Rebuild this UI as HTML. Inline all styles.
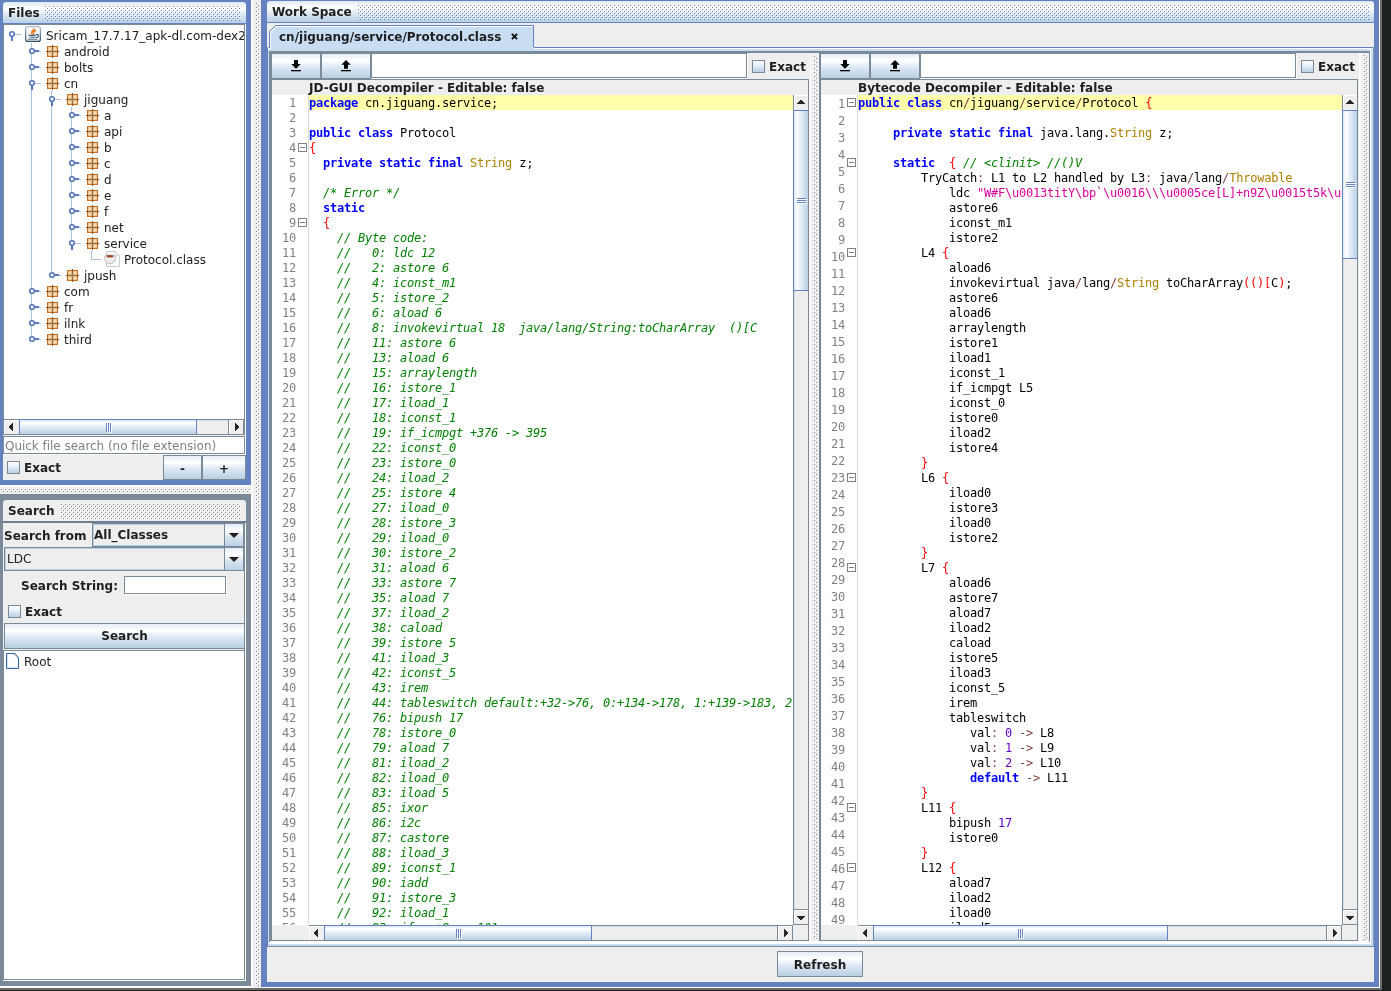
<!DOCTYPE html>
<html lang="en"><head><meta charset="utf-8"><title>Bytecode Viewer</title>
<style>
*{box-sizing:border-box;margin:0;padding:0}
html,body{width:1391px;height:991px;overflow:hidden;background:#1e221e}
body{position:relative;font-family:"DejaVu Sans","Liberation Sans",sans-serif;font-size:12px;color:#1c1c1c;line-height:15px}
#app{position:absolute;left:0;top:0;width:1391px;height:991px;overflow:hidden;filter:contrast(1)}
.a{position:absolute}
.b{font-weight:bold}
/* +1px baseline tweak to match Java2D text placement */
.ui{padding-top:1px;font-family:"DejaVu Sans","Liberation Sans",sans-serif;font-size:12px;white-space:pre;color:#202020}
.grad{background:linear-gradient(to bottom,#dde8f3 0%,#ffffff 30%,#dde8f3 60%,#b8cfe5 100%)}
.gradh{background:linear-gradient(to right,#dde8f3 0%,#ffffff 30%,#dde8f3 60%,#b8cfe5 100%)}
.btn{border:1px solid #7a8a99;background:linear-gradient(to bottom,#e4edf6 0%,#ffffff 28%,#dde8f3 55%,#b8cfe5 100%)}
.tf{border:1px solid #7a8a99;background:#fff;box-shadow:1px 1px 0 #fff}
.cb{width:13px;height:13px;border:1px solid #7a8a99;background:linear-gradient(to bottom,#ffffff 0%,#e8f0f8 40%,#b8cfe5 100%)}
.mono{font-family:"DejaVu Sans Mono","Liberation Mono",monospace;font-size:12px;letter-spacing:-0.2246px;white-space:pre;line-height:15px;color:#000}
.ln{font-family:"DejaVu Sans Mono","Liberation Mono",monospace;color:#808080;text-align:right;white-space:pre}
.k{color:#0000ff;font-weight:bold}
.c{color:#008000;font-style:italic}
.s{color:#ff0000}
.o{color:#804040}
.t{color:#ad8000}
.q{color:#dc009c}
.n{color:#6400c8}
.row{position:absolute;left:0;height:15px;white-space:pre}
.trow{padding-top:1px;position:absolute;white-space:pre;font-size:12px;color:#202020;line-height:16px;height:16px}
</style></head>
<body>
<div id="app">
<div class="a" style="left:0px;top:0px;width:1382px;height:990px;background:#6b6b6b"></div>
<div class="a" style="left:0px;top:0px;width:1380px;height:988px;background:#ffffff"></div>
<div class="a" style="left:0px;top:0px;width:1379px;height:987px;background:#eeeeee"></div>
<div class="a" style="left:0px;top:0px;width:251px;height:485px;background:#6382bf"></div>
<div class="a grad" style="left:3px;top:2px;width:243px;height:21px;border-radius:3px 3px 0 0"></div>
<div class="a" style="left:3px;top:24px;width:243px;height:456px;background:#eeeeee"></div>
<div class="a" style="left:3px;top:24px;width:243px;height:1px;background:#7a8a99"></div>
<svg class="a" style="left:44px;top:5px" width="197" height="16" shape-rendering="crispEdges"><defs><pattern id="bpF" width="4" height="4" patternUnits="userSpaceOnUse"><rect x="0" y="0" width="1" height="1" fill="#ffffff"/><rect x="1" y="1" width="1" height="1" fill="#6382bf"/><rect x="2" y="2" width="1" height="1" fill="#ffffff"/><rect x="3" y="3" width="1" height="1" fill="#6382bf"/></pattern></defs><rect width="197" height="16" fill="url(#bpF)"/></svg>
<div class="a ui b" style="left:8px;top:3px;width:40px;height:18px;line-height:18px">Files</div>
<div class="a" style="left:0px;top:485px;width:251px;height:2px;background:#ffffff"></div>
<div class="a" style="left:0px;top:487px;width:251px;height:7px;background:#eeeeee"></div>
<svg class="a" style="left:0px;top:488px" width="251" height="4" shape-rendering="crispEdges"><defs><pattern id="spH" width="4" height="4" patternUnits="userSpaceOnUse"><rect x="0" y="0" width="1" height="1" fill="#ffffff"/><rect x="1" y="1" width="1" height="1" fill="#7a8a99"/><rect x="2" y="2" width="1" height="1" fill="#ffffff"/><rect x="3" y="3" width="1" height="1" fill="#7a8a99"/></pattern></defs><rect width="251" height="4" fill="url(#spH)"/></svg>
<div class="a" style="left:0px;top:494px;width:251px;height:492px;background:#7a8a99"></div>
<div class="a" style="left:3px;top:500px;width:243px;height:21px;background:#eeeeee;border-radius:3px 3px 0 0"></div>
<div class="a" style="left:3px;top:523px;width:243px;height:458px;background:#eeeeee"></div>
<svg class="a" style="left:60px;top:503px" width="181" height="16" shape-rendering="crispEdges"><defs><pattern id="bpS" width="4" height="4" patternUnits="userSpaceOnUse"><rect x="0" y="0" width="1" height="1" fill="#ffffff"/><rect x="1" y="1" width="1" height="1" fill="#7a8a99"/><rect x="2" y="2" width="1" height="1" fill="#ffffff"/><rect x="3" y="3" width="1" height="1" fill="#7a8a99"/></pattern></defs><rect width="181" height="16" fill="url(#bpS)"/></svg>
<div class="a ui b" style="left:8px;top:501px;width:60px;height:18px;line-height:18px">Search</div>
<div class="a" style="left:0px;top:986px;width:251px;height:2px;background:#ffffff"></div>
<div class="a" style="left:251px;top:0px;width:2px;height:988px;background:#ffffff"></div>
<div class="a" style="left:253px;top:0px;width:8px;height:988px;background:#eeeeee"></div>
<svg class="a" style="left:255px;top:2px" width="4" height="984" shape-rendering="crispEdges"><defs><pattern id="spV" width="4" height="4" patternUnits="userSpaceOnUse"><rect x="0" y="0" width="1" height="1" fill="#ffffff"/><rect x="1" y="1" width="1" height="1" fill="#7a8a99"/><rect x="2" y="2" width="1" height="1" fill="#ffffff"/><rect x="3" y="3" width="1" height="1" fill="#7a8a99"/></pattern></defs><rect width="4" height="984" fill="url(#spV)"/></svg>
<div class="a" style="left:261px;top:0px;width:1118px;height:987px;background:#6382bf"></div>
<div class="a grad" style="left:267px;top:1px;width:1107px;height:21px;border-radius:3px 3px 0 0"></div>
<div class="a" style="left:267px;top:23px;width:1107px;height:959px;background:#eeeeee"></div>
<svg class="a" style="left:357px;top:4px" width="1012" height="16" shape-rendering="crispEdges"><defs><pattern id="bpW" width="4" height="4" patternUnits="userSpaceOnUse"><rect x="0" y="0" width="1" height="1" fill="#ffffff"/><rect x="1" y="1" width="1" height="1" fill="#6382bf"/><rect x="2" y="2" width="1" height="1" fill="#ffffff"/><rect x="3" y="3" width="1" height="1" fill="#6382bf"/></pattern></defs><rect width="1012" height="16" fill="url(#bpW)"/></svg>
<div class="a ui b" style="left:272px;top:2px;width:90px;height:18px;line-height:18px">Work Space</div>
<div class="a" style="left:3px;top:24px;width:242px;height:411px;background:#ffffff;border:1px solid #7a8a99"></div>
<div class="a" style="left:245px;top:24px;width:1px;height:456px;background:#ffffff"></div>
<div class="a" style="left:4px;top:25px;width:240px;height:394px;overflow:hidden;background:#fff"><div class="a" style="left:27px;top:18px;width:1px;height:296px;background:#a9c0e2"></div><div class="a" style="left:47px;top:66px;width:1px;height:184px;background:#a9c0e2"></div><div class="a" style="left:67px;top:82px;width:1px;height:136px;background:#a9c0e2"></div><div class="a" style="left:87px;top:226px;width:1px;height:9px;background:#a9c0e2"></div><div class="a" style="left:87px;top:234px;width:10px;height:1px;background:#a9c0e2"></div><svg class="a" style="left:4px;top:5px" width="16" height="14" viewBox="0 0 16 14"><rect x="7" y="4" width="6" height="1" fill="#a9c0e2"/><rect x="3" y="6" width="2" height="5" fill="#5878be"/><circle cx="4" cy="4" r="2.3" fill="#fff" stroke="#5878be" stroke-width="1.6"/></svg><svg class="a" style="left:21px;top:1px" width="16" height="16" viewBox="0 0 16 16"><defs><linearGradient id="jg" x1="0" y1="0" x2="0" y2="1"><stop offset="0" stop-color="#a9bfd1"/><stop offset="1" stop-color="#2f4f68"/></linearGradient><linearGradient id="jf" x1="0" y1="0" x2="0" y2="1"><stop offset="0" stop-color="#ffffff"/><stop offset="1" stop-color="#e6e6e6"/></linearGradient></defs><rect x="0.6" y="0.6" width="14.8" height="14.8" rx="2.2" fill="url(#jf)" stroke="url(#jg)" stroke-width="1.2"/><path d="M7.4 8.6 C5.2 6.6 7.4 4.6 9.6 2.8 M8.6 8.2 C7.4 6.6 9 5.8 10.8 4.6 M7 6 L9 4.8" fill="none" stroke="#ea7210" stroke-width="1.15" stroke-linecap="round"/><path d="M4 9.4 H10.6 M5.2 11.3 H9.8" fill="none" stroke="#40627f" stroke-width="1.1" stroke-linecap="round"/><path d="M3.4 13.3 H11.8" fill="none" stroke="#5b7c98" stroke-width="1" stroke-linecap="round"/><path d="M11.4 8.3 C14.4 8.6 14.2 11.4 11.3 11.7" fill="none" stroke="#40627f" stroke-width="1.2" stroke-linecap="round"/></svg><div class="trow" style="left:42px;top:1px;height:18px;line-height:18px">Sricam_17.7.17_apk-dl.com-dex2jar.jar</div><svg class="a" style="left:24px;top:22px" width="16" height="14" viewBox="0 0 16 14"><rect x="6" y="3" width="5" height="2" fill="#5878be"/><rect x="11" y="4" width="2" height="1" fill="#a9c0e2"/><circle cx="4" cy="4" r="2.3" fill="#fff" stroke="#5878be" stroke-width="1.6"/></svg><svg class="a" style="left:42px;top:20px" width="13" height="13" viewBox="0 0 13 13"><defs><radialGradient id="pg" cx="50%" cy="50%" r="60%"><stop offset="0" stop-color="#fff4c2"/><stop offset="1" stop-color="#ecc48c"/></radialGradient></defs><rect x="1.5" y="1.5" width="10" height="10" fill="#efcc96" stroke="#c6711f" stroke-width="1"/><rect x="2.4" y="2.4" width="3.4" height="3.4" fill="url(#pg)"/><rect x="7.2" y="2.4" width="3.4" height="3.4" fill="url(#pg)"/><rect x="2.4" y="7.2" width="3.4" height="3.4" fill="url(#pg)"/><rect x="7.2" y="7.2" width="3.4" height="3.4" fill="url(#pg)"/><rect x="6" y="0" width="1" height="13" fill="#7c4a30"/><rect x="0" y="6" width="13" height="1" fill="#7c4a30"/><rect x="5.5" y="2" width="2" height="9" fill="#b98b66" opacity=".55"/><rect x="2" y="5.5" width="9" height="2" fill="#b98b66" opacity=".55"/></svg><div class="trow" style="left:60px;top:18px;height:16px;line-height:16px">android</div><svg class="a" style="left:24px;top:38px" width="16" height="14" viewBox="0 0 16 14"><rect x="6" y="3" width="5" height="2" fill="#5878be"/><rect x="11" y="4" width="2" height="1" fill="#a9c0e2"/><circle cx="4" cy="4" r="2.3" fill="#fff" stroke="#5878be" stroke-width="1.6"/></svg><svg class="a" style="left:42px;top:36px" width="13" height="13" viewBox="0 0 13 13"><defs><radialGradient id="pg" cx="50%" cy="50%" r="60%"><stop offset="0" stop-color="#fff4c2"/><stop offset="1" stop-color="#ecc48c"/></radialGradient></defs><rect x="1.5" y="1.5" width="10" height="10" fill="#efcc96" stroke="#c6711f" stroke-width="1"/><rect x="2.4" y="2.4" width="3.4" height="3.4" fill="url(#pg)"/><rect x="7.2" y="2.4" width="3.4" height="3.4" fill="url(#pg)"/><rect x="2.4" y="7.2" width="3.4" height="3.4" fill="url(#pg)"/><rect x="7.2" y="7.2" width="3.4" height="3.4" fill="url(#pg)"/><rect x="6" y="0" width="1" height="13" fill="#7c4a30"/><rect x="0" y="6" width="13" height="1" fill="#7c4a30"/><rect x="5.5" y="2" width="2" height="9" fill="#b98b66" opacity=".55"/><rect x="2" y="5.5" width="9" height="2" fill="#b98b66" opacity=".55"/></svg><div class="trow" style="left:60px;top:34px;height:16px;line-height:16px">bolts</div><svg class="a" style="left:24px;top:54px" width="16" height="14" viewBox="0 0 16 14"><rect x="7" y="4" width="6" height="1" fill="#a9c0e2"/><rect x="3" y="6" width="2" height="5" fill="#5878be"/><circle cx="4" cy="4" r="2.3" fill="#fff" stroke="#5878be" stroke-width="1.6"/></svg><svg class="a" style="left:42px;top:52px" width="13" height="13" viewBox="0 0 13 13"><defs><radialGradient id="pg" cx="50%" cy="50%" r="60%"><stop offset="0" stop-color="#fff4c2"/><stop offset="1" stop-color="#ecc48c"/></radialGradient></defs><rect x="1.5" y="1.5" width="10" height="10" fill="#efcc96" stroke="#c6711f" stroke-width="1"/><rect x="2.4" y="2.4" width="3.4" height="3.4" fill="url(#pg)"/><rect x="7.2" y="2.4" width="3.4" height="3.4" fill="url(#pg)"/><rect x="2.4" y="7.2" width="3.4" height="3.4" fill="url(#pg)"/><rect x="7.2" y="7.2" width="3.4" height="3.4" fill="url(#pg)"/><rect x="6" y="0" width="1" height="13" fill="#7c4a30"/><rect x="0" y="6" width="13" height="1" fill="#7c4a30"/><rect x="5.5" y="2" width="2" height="9" fill="#b98b66" opacity=".55"/><rect x="2" y="5.5" width="9" height="2" fill="#b98b66" opacity=".55"/></svg><div class="trow" style="left:60px;top:50px;height:16px;line-height:16px">cn</div><svg class="a" style="left:44px;top:70px" width="16" height="14" viewBox="0 0 16 14"><rect x="7" y="4" width="6" height="1" fill="#a9c0e2"/><rect x="3" y="6" width="2" height="5" fill="#5878be"/><circle cx="4" cy="4" r="2.3" fill="#fff" stroke="#5878be" stroke-width="1.6"/></svg><svg class="a" style="left:62px;top:68px" width="13" height="13" viewBox="0 0 13 13"><defs><radialGradient id="pg" cx="50%" cy="50%" r="60%"><stop offset="0" stop-color="#fff4c2"/><stop offset="1" stop-color="#ecc48c"/></radialGradient></defs><rect x="1.5" y="1.5" width="10" height="10" fill="#efcc96" stroke="#c6711f" stroke-width="1"/><rect x="2.4" y="2.4" width="3.4" height="3.4" fill="url(#pg)"/><rect x="7.2" y="2.4" width="3.4" height="3.4" fill="url(#pg)"/><rect x="2.4" y="7.2" width="3.4" height="3.4" fill="url(#pg)"/><rect x="7.2" y="7.2" width="3.4" height="3.4" fill="url(#pg)"/><rect x="6" y="0" width="1" height="13" fill="#7c4a30"/><rect x="0" y="6" width="13" height="1" fill="#7c4a30"/><rect x="5.5" y="2" width="2" height="9" fill="#b98b66" opacity=".55"/><rect x="2" y="5.5" width="9" height="2" fill="#b98b66" opacity=".55"/></svg><div class="trow" style="left:80px;top:66px;height:16px;line-height:16px">jiguang</div><svg class="a" style="left:64px;top:86px" width="16" height="14" viewBox="0 0 16 14"><rect x="6" y="3" width="5" height="2" fill="#5878be"/><rect x="11" y="4" width="2" height="1" fill="#a9c0e2"/><circle cx="4" cy="4" r="2.3" fill="#fff" stroke="#5878be" stroke-width="1.6"/></svg><svg class="a" style="left:82px;top:84px" width="13" height="13" viewBox="0 0 13 13"><defs><radialGradient id="pg" cx="50%" cy="50%" r="60%"><stop offset="0" stop-color="#fff4c2"/><stop offset="1" stop-color="#ecc48c"/></radialGradient></defs><rect x="1.5" y="1.5" width="10" height="10" fill="#efcc96" stroke="#c6711f" stroke-width="1"/><rect x="2.4" y="2.4" width="3.4" height="3.4" fill="url(#pg)"/><rect x="7.2" y="2.4" width="3.4" height="3.4" fill="url(#pg)"/><rect x="2.4" y="7.2" width="3.4" height="3.4" fill="url(#pg)"/><rect x="7.2" y="7.2" width="3.4" height="3.4" fill="url(#pg)"/><rect x="6" y="0" width="1" height="13" fill="#7c4a30"/><rect x="0" y="6" width="13" height="1" fill="#7c4a30"/><rect x="5.5" y="2" width="2" height="9" fill="#b98b66" opacity=".55"/><rect x="2" y="5.5" width="9" height="2" fill="#b98b66" opacity=".55"/></svg><div class="trow" style="left:100px;top:82px;height:16px;line-height:16px">a</div><svg class="a" style="left:64px;top:102px" width="16" height="14" viewBox="0 0 16 14"><rect x="6" y="3" width="5" height="2" fill="#5878be"/><rect x="11" y="4" width="2" height="1" fill="#a9c0e2"/><circle cx="4" cy="4" r="2.3" fill="#fff" stroke="#5878be" stroke-width="1.6"/></svg><svg class="a" style="left:82px;top:100px" width="13" height="13" viewBox="0 0 13 13"><defs><radialGradient id="pg" cx="50%" cy="50%" r="60%"><stop offset="0" stop-color="#fff4c2"/><stop offset="1" stop-color="#ecc48c"/></radialGradient></defs><rect x="1.5" y="1.5" width="10" height="10" fill="#efcc96" stroke="#c6711f" stroke-width="1"/><rect x="2.4" y="2.4" width="3.4" height="3.4" fill="url(#pg)"/><rect x="7.2" y="2.4" width="3.4" height="3.4" fill="url(#pg)"/><rect x="2.4" y="7.2" width="3.4" height="3.4" fill="url(#pg)"/><rect x="7.2" y="7.2" width="3.4" height="3.4" fill="url(#pg)"/><rect x="6" y="0" width="1" height="13" fill="#7c4a30"/><rect x="0" y="6" width="13" height="1" fill="#7c4a30"/><rect x="5.5" y="2" width="2" height="9" fill="#b98b66" opacity=".55"/><rect x="2" y="5.5" width="9" height="2" fill="#b98b66" opacity=".55"/></svg><div class="trow" style="left:100px;top:98px;height:16px;line-height:16px">api</div><svg class="a" style="left:64px;top:118px" width="16" height="14" viewBox="0 0 16 14"><rect x="6" y="3" width="5" height="2" fill="#5878be"/><rect x="11" y="4" width="2" height="1" fill="#a9c0e2"/><circle cx="4" cy="4" r="2.3" fill="#fff" stroke="#5878be" stroke-width="1.6"/></svg><svg class="a" style="left:82px;top:116px" width="13" height="13" viewBox="0 0 13 13"><defs><radialGradient id="pg" cx="50%" cy="50%" r="60%"><stop offset="0" stop-color="#fff4c2"/><stop offset="1" stop-color="#ecc48c"/></radialGradient></defs><rect x="1.5" y="1.5" width="10" height="10" fill="#efcc96" stroke="#c6711f" stroke-width="1"/><rect x="2.4" y="2.4" width="3.4" height="3.4" fill="url(#pg)"/><rect x="7.2" y="2.4" width="3.4" height="3.4" fill="url(#pg)"/><rect x="2.4" y="7.2" width="3.4" height="3.4" fill="url(#pg)"/><rect x="7.2" y="7.2" width="3.4" height="3.4" fill="url(#pg)"/><rect x="6" y="0" width="1" height="13" fill="#7c4a30"/><rect x="0" y="6" width="13" height="1" fill="#7c4a30"/><rect x="5.5" y="2" width="2" height="9" fill="#b98b66" opacity=".55"/><rect x="2" y="5.5" width="9" height="2" fill="#b98b66" opacity=".55"/></svg><div class="trow" style="left:100px;top:114px;height:16px;line-height:16px">b</div><svg class="a" style="left:64px;top:134px" width="16" height="14" viewBox="0 0 16 14"><rect x="6" y="3" width="5" height="2" fill="#5878be"/><rect x="11" y="4" width="2" height="1" fill="#a9c0e2"/><circle cx="4" cy="4" r="2.3" fill="#fff" stroke="#5878be" stroke-width="1.6"/></svg><svg class="a" style="left:82px;top:132px" width="13" height="13" viewBox="0 0 13 13"><defs><radialGradient id="pg" cx="50%" cy="50%" r="60%"><stop offset="0" stop-color="#fff4c2"/><stop offset="1" stop-color="#ecc48c"/></radialGradient></defs><rect x="1.5" y="1.5" width="10" height="10" fill="#efcc96" stroke="#c6711f" stroke-width="1"/><rect x="2.4" y="2.4" width="3.4" height="3.4" fill="url(#pg)"/><rect x="7.2" y="2.4" width="3.4" height="3.4" fill="url(#pg)"/><rect x="2.4" y="7.2" width="3.4" height="3.4" fill="url(#pg)"/><rect x="7.2" y="7.2" width="3.4" height="3.4" fill="url(#pg)"/><rect x="6" y="0" width="1" height="13" fill="#7c4a30"/><rect x="0" y="6" width="13" height="1" fill="#7c4a30"/><rect x="5.5" y="2" width="2" height="9" fill="#b98b66" opacity=".55"/><rect x="2" y="5.5" width="9" height="2" fill="#b98b66" opacity=".55"/></svg><div class="trow" style="left:100px;top:130px;height:16px;line-height:16px">c</div><svg class="a" style="left:64px;top:150px" width="16" height="14" viewBox="0 0 16 14"><rect x="6" y="3" width="5" height="2" fill="#5878be"/><rect x="11" y="4" width="2" height="1" fill="#a9c0e2"/><circle cx="4" cy="4" r="2.3" fill="#fff" stroke="#5878be" stroke-width="1.6"/></svg><svg class="a" style="left:82px;top:148px" width="13" height="13" viewBox="0 0 13 13"><defs><radialGradient id="pg" cx="50%" cy="50%" r="60%"><stop offset="0" stop-color="#fff4c2"/><stop offset="1" stop-color="#ecc48c"/></radialGradient></defs><rect x="1.5" y="1.5" width="10" height="10" fill="#efcc96" stroke="#c6711f" stroke-width="1"/><rect x="2.4" y="2.4" width="3.4" height="3.4" fill="url(#pg)"/><rect x="7.2" y="2.4" width="3.4" height="3.4" fill="url(#pg)"/><rect x="2.4" y="7.2" width="3.4" height="3.4" fill="url(#pg)"/><rect x="7.2" y="7.2" width="3.4" height="3.4" fill="url(#pg)"/><rect x="6" y="0" width="1" height="13" fill="#7c4a30"/><rect x="0" y="6" width="13" height="1" fill="#7c4a30"/><rect x="5.5" y="2" width="2" height="9" fill="#b98b66" opacity=".55"/><rect x="2" y="5.5" width="9" height="2" fill="#b98b66" opacity=".55"/></svg><div class="trow" style="left:100px;top:146px;height:16px;line-height:16px">d</div><svg class="a" style="left:64px;top:166px" width="16" height="14" viewBox="0 0 16 14"><rect x="6" y="3" width="5" height="2" fill="#5878be"/><rect x="11" y="4" width="2" height="1" fill="#a9c0e2"/><circle cx="4" cy="4" r="2.3" fill="#fff" stroke="#5878be" stroke-width="1.6"/></svg><svg class="a" style="left:82px;top:164px" width="13" height="13" viewBox="0 0 13 13"><defs><radialGradient id="pg" cx="50%" cy="50%" r="60%"><stop offset="0" stop-color="#fff4c2"/><stop offset="1" stop-color="#ecc48c"/></radialGradient></defs><rect x="1.5" y="1.5" width="10" height="10" fill="#efcc96" stroke="#c6711f" stroke-width="1"/><rect x="2.4" y="2.4" width="3.4" height="3.4" fill="url(#pg)"/><rect x="7.2" y="2.4" width="3.4" height="3.4" fill="url(#pg)"/><rect x="2.4" y="7.2" width="3.4" height="3.4" fill="url(#pg)"/><rect x="7.2" y="7.2" width="3.4" height="3.4" fill="url(#pg)"/><rect x="6" y="0" width="1" height="13" fill="#7c4a30"/><rect x="0" y="6" width="13" height="1" fill="#7c4a30"/><rect x="5.5" y="2" width="2" height="9" fill="#b98b66" opacity=".55"/><rect x="2" y="5.5" width="9" height="2" fill="#b98b66" opacity=".55"/></svg><div class="trow" style="left:100px;top:162px;height:16px;line-height:16px">e</div><svg class="a" style="left:64px;top:182px" width="16" height="14" viewBox="0 0 16 14"><rect x="6" y="3" width="5" height="2" fill="#5878be"/><rect x="11" y="4" width="2" height="1" fill="#a9c0e2"/><circle cx="4" cy="4" r="2.3" fill="#fff" stroke="#5878be" stroke-width="1.6"/></svg><svg class="a" style="left:82px;top:180px" width="13" height="13" viewBox="0 0 13 13"><defs><radialGradient id="pg" cx="50%" cy="50%" r="60%"><stop offset="0" stop-color="#fff4c2"/><stop offset="1" stop-color="#ecc48c"/></radialGradient></defs><rect x="1.5" y="1.5" width="10" height="10" fill="#efcc96" stroke="#c6711f" stroke-width="1"/><rect x="2.4" y="2.4" width="3.4" height="3.4" fill="url(#pg)"/><rect x="7.2" y="2.4" width="3.4" height="3.4" fill="url(#pg)"/><rect x="2.4" y="7.2" width="3.4" height="3.4" fill="url(#pg)"/><rect x="7.2" y="7.2" width="3.4" height="3.4" fill="url(#pg)"/><rect x="6" y="0" width="1" height="13" fill="#7c4a30"/><rect x="0" y="6" width="13" height="1" fill="#7c4a30"/><rect x="5.5" y="2" width="2" height="9" fill="#b98b66" opacity=".55"/><rect x="2" y="5.5" width="9" height="2" fill="#b98b66" opacity=".55"/></svg><div class="trow" style="left:100px;top:178px;height:16px;line-height:16px">f</div><svg class="a" style="left:64px;top:198px" width="16" height="14" viewBox="0 0 16 14"><rect x="6" y="3" width="5" height="2" fill="#5878be"/><rect x="11" y="4" width="2" height="1" fill="#a9c0e2"/><circle cx="4" cy="4" r="2.3" fill="#fff" stroke="#5878be" stroke-width="1.6"/></svg><svg class="a" style="left:82px;top:196px" width="13" height="13" viewBox="0 0 13 13"><defs><radialGradient id="pg" cx="50%" cy="50%" r="60%"><stop offset="0" stop-color="#fff4c2"/><stop offset="1" stop-color="#ecc48c"/></radialGradient></defs><rect x="1.5" y="1.5" width="10" height="10" fill="#efcc96" stroke="#c6711f" stroke-width="1"/><rect x="2.4" y="2.4" width="3.4" height="3.4" fill="url(#pg)"/><rect x="7.2" y="2.4" width="3.4" height="3.4" fill="url(#pg)"/><rect x="2.4" y="7.2" width="3.4" height="3.4" fill="url(#pg)"/><rect x="7.2" y="7.2" width="3.4" height="3.4" fill="url(#pg)"/><rect x="6" y="0" width="1" height="13" fill="#7c4a30"/><rect x="0" y="6" width="13" height="1" fill="#7c4a30"/><rect x="5.5" y="2" width="2" height="9" fill="#b98b66" opacity=".55"/><rect x="2" y="5.5" width="9" height="2" fill="#b98b66" opacity=".55"/></svg><div class="trow" style="left:100px;top:194px;height:16px;line-height:16px">net</div><svg class="a" style="left:64px;top:214px" width="16" height="14" viewBox="0 0 16 14"><rect x="7" y="4" width="6" height="1" fill="#a9c0e2"/><rect x="3" y="6" width="2" height="5" fill="#5878be"/><circle cx="4" cy="4" r="2.3" fill="#fff" stroke="#5878be" stroke-width="1.6"/></svg><svg class="a" style="left:82px;top:212px" width="13" height="13" viewBox="0 0 13 13"><defs><radialGradient id="pg" cx="50%" cy="50%" r="60%"><stop offset="0" stop-color="#fff4c2"/><stop offset="1" stop-color="#ecc48c"/></radialGradient></defs><rect x="1.5" y="1.5" width="10" height="10" fill="#efcc96" stroke="#c6711f" stroke-width="1"/><rect x="2.4" y="2.4" width="3.4" height="3.4" fill="url(#pg)"/><rect x="7.2" y="2.4" width="3.4" height="3.4" fill="url(#pg)"/><rect x="2.4" y="7.2" width="3.4" height="3.4" fill="url(#pg)"/><rect x="7.2" y="7.2" width="3.4" height="3.4" fill="url(#pg)"/><rect x="6" y="0" width="1" height="13" fill="#7c4a30"/><rect x="0" y="6" width="13" height="1" fill="#7c4a30"/><rect x="5.5" y="2" width="2" height="9" fill="#b98b66" opacity=".55"/><rect x="2" y="5.5" width="9" height="2" fill="#b98b66" opacity=".55"/></svg><div class="trow" style="left:100px;top:210px;height:16px;line-height:16px">service</div><svg class="a" style="left:100px;top:226px" width="16" height="16" viewBox="0 0 16 16"><path d="M2.5 0.6 H11.6 L15.4 4.4 V15.4 H2.5 Z" fill="#ffffff" stroke="#c9c9c9" stroke-width="1"/><path d="M11.6 0.6 V4.4 H15.4" fill="#f4f4f4" stroke="#d2d2d2" stroke-width=".8"/><path d="M0.5 5.4 C0.5 3.6 11.5 3.6 11.5 5.4 C11.7 10.4 9.6 12.8 6 12.8 C2.4 12.8 0.3 10.4 0.5 5.4 Z" fill="#f0f0f0" stroke="#b9b9b9" stroke-width=".9"/><ellipse cx="6" cy="5.3" rx="3.7" ry="1.25" fill="#a04a26"/><path d="M2.4 8.6 C2.8 10.6 4 11.6 6 11.8 C8.6 11.6 9.8 10 10 8" fill="none" stroke="#dcdcdc" stroke-width="1"/></svg><div class="trow" style="left:120px;top:226px;height:16px;line-height:16px">Protocol.class</div><svg class="a" style="left:44px;top:246px" width="16" height="14" viewBox="0 0 16 14"><rect x="6" y="3" width="5" height="2" fill="#5878be"/><rect x="11" y="4" width="2" height="1" fill="#a9c0e2"/><circle cx="4" cy="4" r="2.3" fill="#fff" stroke="#5878be" stroke-width="1.6"/></svg><svg class="a" style="left:62px;top:244px" width="13" height="13" viewBox="0 0 13 13"><defs><radialGradient id="pg" cx="50%" cy="50%" r="60%"><stop offset="0" stop-color="#fff4c2"/><stop offset="1" stop-color="#ecc48c"/></radialGradient></defs><rect x="1.5" y="1.5" width="10" height="10" fill="#efcc96" stroke="#c6711f" stroke-width="1"/><rect x="2.4" y="2.4" width="3.4" height="3.4" fill="url(#pg)"/><rect x="7.2" y="2.4" width="3.4" height="3.4" fill="url(#pg)"/><rect x="2.4" y="7.2" width="3.4" height="3.4" fill="url(#pg)"/><rect x="7.2" y="7.2" width="3.4" height="3.4" fill="url(#pg)"/><rect x="6" y="0" width="1" height="13" fill="#7c4a30"/><rect x="0" y="6" width="13" height="1" fill="#7c4a30"/><rect x="5.5" y="2" width="2" height="9" fill="#b98b66" opacity=".55"/><rect x="2" y="5.5" width="9" height="2" fill="#b98b66" opacity=".55"/></svg><div class="trow" style="left:80px;top:242px;height:16px;line-height:16px">jpush</div><svg class="a" style="left:24px;top:262px" width="16" height="14" viewBox="0 0 16 14"><rect x="6" y="3" width="5" height="2" fill="#5878be"/><rect x="11" y="4" width="2" height="1" fill="#a9c0e2"/><circle cx="4" cy="4" r="2.3" fill="#fff" stroke="#5878be" stroke-width="1.6"/></svg><svg class="a" style="left:42px;top:260px" width="13" height="13" viewBox="0 0 13 13"><defs><radialGradient id="pg" cx="50%" cy="50%" r="60%"><stop offset="0" stop-color="#fff4c2"/><stop offset="1" stop-color="#ecc48c"/></radialGradient></defs><rect x="1.5" y="1.5" width="10" height="10" fill="#efcc96" stroke="#c6711f" stroke-width="1"/><rect x="2.4" y="2.4" width="3.4" height="3.4" fill="url(#pg)"/><rect x="7.2" y="2.4" width="3.4" height="3.4" fill="url(#pg)"/><rect x="2.4" y="7.2" width="3.4" height="3.4" fill="url(#pg)"/><rect x="7.2" y="7.2" width="3.4" height="3.4" fill="url(#pg)"/><rect x="6" y="0" width="1" height="13" fill="#7c4a30"/><rect x="0" y="6" width="13" height="1" fill="#7c4a30"/><rect x="5.5" y="2" width="2" height="9" fill="#b98b66" opacity=".55"/><rect x="2" y="5.5" width="9" height="2" fill="#b98b66" opacity=".55"/></svg><div class="trow" style="left:60px;top:258px;height:16px;line-height:16px">com</div><svg class="a" style="left:24px;top:278px" width="16" height="14" viewBox="0 0 16 14"><rect x="6" y="3" width="5" height="2" fill="#5878be"/><rect x="11" y="4" width="2" height="1" fill="#a9c0e2"/><circle cx="4" cy="4" r="2.3" fill="#fff" stroke="#5878be" stroke-width="1.6"/></svg><svg class="a" style="left:42px;top:276px" width="13" height="13" viewBox="0 0 13 13"><defs><radialGradient id="pg" cx="50%" cy="50%" r="60%"><stop offset="0" stop-color="#fff4c2"/><stop offset="1" stop-color="#ecc48c"/></radialGradient></defs><rect x="1.5" y="1.5" width="10" height="10" fill="#efcc96" stroke="#c6711f" stroke-width="1"/><rect x="2.4" y="2.4" width="3.4" height="3.4" fill="url(#pg)"/><rect x="7.2" y="2.4" width="3.4" height="3.4" fill="url(#pg)"/><rect x="2.4" y="7.2" width="3.4" height="3.4" fill="url(#pg)"/><rect x="7.2" y="7.2" width="3.4" height="3.4" fill="url(#pg)"/><rect x="6" y="0" width="1" height="13" fill="#7c4a30"/><rect x="0" y="6" width="13" height="1" fill="#7c4a30"/><rect x="5.5" y="2" width="2" height="9" fill="#b98b66" opacity=".55"/><rect x="2" y="5.5" width="9" height="2" fill="#b98b66" opacity=".55"/></svg><div class="trow" style="left:60px;top:274px;height:16px;line-height:16px">fr</div><svg class="a" style="left:24px;top:294px" width="16" height="14" viewBox="0 0 16 14"><rect x="6" y="3" width="5" height="2" fill="#5878be"/><rect x="11" y="4" width="2" height="1" fill="#a9c0e2"/><circle cx="4" cy="4" r="2.3" fill="#fff" stroke="#5878be" stroke-width="1.6"/></svg><svg class="a" style="left:42px;top:292px" width="13" height="13" viewBox="0 0 13 13"><defs><radialGradient id="pg" cx="50%" cy="50%" r="60%"><stop offset="0" stop-color="#fff4c2"/><stop offset="1" stop-color="#ecc48c"/></radialGradient></defs><rect x="1.5" y="1.5" width="10" height="10" fill="#efcc96" stroke="#c6711f" stroke-width="1"/><rect x="2.4" y="2.4" width="3.4" height="3.4" fill="url(#pg)"/><rect x="7.2" y="2.4" width="3.4" height="3.4" fill="url(#pg)"/><rect x="2.4" y="7.2" width="3.4" height="3.4" fill="url(#pg)"/><rect x="7.2" y="7.2" width="3.4" height="3.4" fill="url(#pg)"/><rect x="6" y="0" width="1" height="13" fill="#7c4a30"/><rect x="0" y="6" width="13" height="1" fill="#7c4a30"/><rect x="5.5" y="2" width="2" height="9" fill="#b98b66" opacity=".55"/><rect x="2" y="5.5" width="9" height="2" fill="#b98b66" opacity=".55"/></svg><div class="trow" style="left:60px;top:290px;height:16px;line-height:16px">ilnk</div><svg class="a" style="left:24px;top:310px" width="16" height="14" viewBox="0 0 16 14"><rect x="6" y="3" width="5" height="2" fill="#5878be"/><rect x="11" y="4" width="2" height="1" fill="#a9c0e2"/><circle cx="4" cy="4" r="2.3" fill="#fff" stroke="#5878be" stroke-width="1.6"/></svg><svg class="a" style="left:42px;top:308px" width="13" height="13" viewBox="0 0 13 13"><defs><radialGradient id="pg" cx="50%" cy="50%" r="60%"><stop offset="0" stop-color="#fff4c2"/><stop offset="1" stop-color="#ecc48c"/></radialGradient></defs><rect x="1.5" y="1.5" width="10" height="10" fill="#efcc96" stroke="#c6711f" stroke-width="1"/><rect x="2.4" y="2.4" width="3.4" height="3.4" fill="url(#pg)"/><rect x="7.2" y="2.4" width="3.4" height="3.4" fill="url(#pg)"/><rect x="2.4" y="7.2" width="3.4" height="3.4" fill="url(#pg)"/><rect x="7.2" y="7.2" width="3.4" height="3.4" fill="url(#pg)"/><rect x="6" y="0" width="1" height="13" fill="#7c4a30"/><rect x="0" y="6" width="13" height="1" fill="#7c4a30"/><rect x="5.5" y="2" width="2" height="9" fill="#b98b66" opacity=".55"/><rect x="2" y="5.5" width="9" height="2" fill="#b98b66" opacity=".55"/></svg><div class="trow" style="left:60px;top:306px;height:16px;line-height:16px">third</div></div>
<div class="a" style="left:4px;top:419px;width:240px;height:15px;background:#eeeeee;border-top:1px solid #7a8a99"></div><div class="a" style="left:4px;top:420px;width:240px;height:1px;background:#cfdff0"></div><div class="a" style="left:4px;top:420px;width:15px;height:1px;background:#ffffff"></div><div class="a" style="left:4px;top:420px;width:1px;height:14px;background:#ffffff"></div><div class="a" style="left:229px;top:420px;width:14px;height:1px;background:#ffffff"></div><div class="a" style="left:19px;top:419px;width:1px;height:15px;background:#7a8a99"></div><div class="a" style="left:20px;top:420px;width:1px;height:14px;background:#cfdff0"></div><div class="a" style="left:228px;top:419px;width:1px;height:15px;background:#7a8a99"></div><div class="a" style="left:229px;top:420px;width:1px;height:14px;background:#ffffff"></div><div class="a" style="left:243px;top:419px;width:1px;height:15px;background:#7a8a99"></div><div class="a" style="left:19px;top:419px;width:178px;height:15px;border:1px solid #6382bf;border-bottom:0;background:linear-gradient(to bottom,#dde8f3 0%,#ffffff 22%,#dde8f3 58%,#b8cfe5 100%)"></div><div class="a" style="left:106px;top:423px;width:1px;height:9px;background:#6382bf"></div><div class="a" style="left:107px;top:424px;width:1px;height:9px;background:#ffffff"></div><div class="a" style="left:108px;top:423px;width:1px;height:9px;background:#6382bf"></div><div class="a" style="left:109px;top:424px;width:1px;height:9px;background:#ffffff"></div><div class="a" style="left:110px;top:423px;width:1px;height:9px;background:#6382bf"></div><div class="a" style="left:111px;top:424px;width:1px;height:9px;background:#ffffff"></div><svg class="a" style="left:9px;top:423px" width="4" height="8" viewBox="0 0 4 8" shape-rendering="crispEdges" fill="#262626"><rect x="0" y="3" width="1" height="2"/><rect x="1" y="2" width="1" height="4"/><rect x="2" y="1" width="1" height="6"/><rect x="3" y="0" width="1" height="8"/></svg><svg class="a" style="left:235px;top:423px" width="4" height="8" viewBox="0 0 4 8" shape-rendering="crispEdges" fill="#262626"><rect x="3" y="3" width="1" height="2"/><rect x="2" y="2" width="1" height="4"/><rect x="1" y="1" width="1" height="6"/><rect x="0" y="0" width="1" height="8"/></svg>
<div class="a tf ui" style="left:3px;top:436px;width:242px;height:18px;color:#808080;padding-left:1px;letter-spacing:-0.03px;line-height:16px"><span style="color:#808080">Quick file search (no file extension)</span></div>
<div class="a cb" style="left:7px;top:461px;width:13px;height:13px;"></div>
<div class="a ui b" style="left:24px;top:459px;width:50px;height:17px;line-height:17px">Exact</div>
<div class="a btn ui b" style="left:163px;top:455px;width:39px;height:25px;text-align:center;line-height:24px">-</div>
<div class="a btn ui b" style="left:202px;top:455px;width:44px;height:25px;text-align:center;line-height:24px">+</div>
<div class="a" style="left:3px;top:521px;width:243px;height:2px;background:#6f7f90"></div>
<div class="a" style="left:244px;top:523px;width:1px;height:127px;background:#7a8a99"></div>
<div class="a ui b" style="left:4px;top:526px;width:90px;height:18px;line-height:18px">Search from</div>
<div class="a" style="left:92px;top:523px;width:152px;height:24px;border:1px solid #7a8a99;background:#eeeeee;box-shadow:inset 1px 1px 0 #b8cfe5, inset -1px -1px 0 #b8cfe5"></div><div class="a btn" style="left:224px;top:523px;width:20px;height:24px;border:1px solid #7a8a99;"></div><svg class="a" style="left:229px;top:533px" width="10" height="5" viewBox="0 0 10 5"><polygon points="0,0 10,0 5,5" fill="#1f1f1f"/></svg><div class="a ui b" style="left:94px;top:523px;width:128px;height:24px;line-height:23px">All_Classes</div>
<div class="a" style="left:4px;top:547px;width:240px;height:24px;border:1px solid #7a8a99;background:#eeeeee;box-shadow:inset 1px 1px 0 #b8cfe5, inset -1px -1px 0 #b8cfe5"></div><div class="a btn" style="left:224px;top:547px;width:20px;height:24px;border:1px solid #7a8a99;"></div><svg class="a" style="left:229px;top:557px" width="10" height="5" viewBox="0 0 10 5"><polygon points="0,0 10,0 5,5" fill="#1f1f1f"/></svg><div class="a ui b" style="left:7px;top:547px;width:216px;height:24px;line-height:23px"><span style="font-weight:normal">LDC</span></div>
<div class="a ui b" style="left:21px;top:576px;width:104px;height:18px;line-height:18px">Search String:</div>
<div class="a tf" style="left:124px;top:576px;width:102px;height:18px;"></div>
<div class="a cb" style="left:8px;top:605px;width:13px;height:13px;"></div>
<div class="a ui b" style="left:25px;top:603px;width:50px;height:17px;line-height:17px">Exact</div>
<div class="a btn ui b" style="left:4px;top:623px;width:241px;height:26px;text-align:center;line-height:23px">Search</div>
<div class="a" style="left:3px;top:650px;width:242px;height:330px;background:#ffffff;border:1px solid #7a8a99"></div>
<div class="a" style="left:245px;top:523px;width:1px;height:458px;background:#ffffff"></div>
<div class="a" style="left:3px;top:980px;width:243px;height:1px;background:#ffffff"></div>
<svg class="a" style="left:6px;top:653px" width="13" height="16" viewBox="0 0 13 16"><path d="M0.5 0.5 H9 L12.5 5 V15.5 H0.5 Z" fill="#ffffff" stroke="#2f62a3" stroke-width="1"/><path d="M1.5 1.5 V14.5 H11.5" fill="none" stroke="#dce8f6" stroke-width="1"/><path d="M8 1.2 L11.8 5.6" fill="none" stroke="#6f95c6" stroke-width="1" stroke-dasharray="1 0.7"/></svg>
<div class="a ui" style="left:24px;top:653px;width:60px;height:17px;line-height:17px">Root</div>
<svg class="a" style="left:267px;top:23px" width="272" height="28" viewBox="0 0 272 28"><path d="M2.5 25.5 V8.5 L8.5 2.5 H266.5 V25" fill="#c8ddf2" stroke="#6382bf" stroke-width="1"/><path d="M3.5 25 V9 L9 3.5 H265.5" fill="none" stroke="#ffffff" stroke-width="1"/><rect x="3" y="24" width="264" height="4" fill="#c8ddf2"/></svg>
<div class="a ui b" style="left:279px;top:28px;width:240px;height:17px;line-height:17px">cn/jiguang/service/Protocol.class</div>
<svg class="a" style="left:511px;top:33px" width="7" height="7" viewBox="0 0 7 7"><path d="M0.9 0.9 L6.1 6.1 M6.1 0.9 L0.9 6.1" stroke="#111" stroke-width="1.9" fill="none"/></svg>
<div class="a" style="left:534px;top:47px;width:840px;height:1px;background:#6382bf"></div>
<div class="a" style="left:534px;top:48px;width:837px;height:1px;background:#ffffff"></div>
<div class="a" style="left:267px;top:49px;width:1107px;height:2px;background:#c8ddf2"></div>
<div class="a" style="left:268px;top:48px;width:3px;height:1px;background:#ffffff"></div>
<div class="a" style="left:267px;top:47px;width:1px;height:900px;background:#6382bf"></div>
<div class="a" style="left:268px;top:49px;width:1px;height:897px;background:#c8ddf2"></div>
<div class="a" style="left:1371px;top:49px;width:2px;height:897px;background:#c8ddf2"></div>
<div class="a" style="left:1373px;top:47px;width:1px;height:900px;background:#8a9cb0"></div>
<div class="a" style="left:1370px;top:49px;width:1px;height:895px;background:#ffffff"></div>
<div class="a" style="left:268px;top:944px;width:1105px;height:2px;background:#c8ddf2"></div>
<div class="a" style="left:267px;top:946px;width:1107px;height:1px;background:#7a8a99"></div>
<div class="a" style="left:269px;top:942px;width:1102px;height:2px;background:#ffffff"></div>
<div class="a" style="left:269px;top:51px;width:1101px;height:2px;background:#7a8a99"></div>
<div class="a" style="left:269px;top:51px;width:2px;height:891px;background:#7a8a99"></div>
<div class="a" style="left:270px;top:941px;width:1100px;height:1px;background:#ffffff"></div>
<div class="a" style="left:1369px;top:53px;width:1px;height:889px;background:#7a8a99"></div>
<div class="a btn" style="left:271px;top:53px;width:50px;height:26px;"></div><svg class="a" style="left:291px;top:60px" width="10" height="12" viewBox="0 0 10 12"><path d="M3 0 H7 V4 H9.7 L5 8.7 L0.3 4 H3 Z" fill="#000"/><rect x="0" y="10" width="10" height="1.3" fill="#000"/></svg><div class="a btn" style="left:321px;top:53px;width:50px;height:26px;"></div><svg class="a" style="left:341px;top:60px" width="10" height="12" viewBox="0 0 10 12"><path d="M3 8.7 H7 V4.7 H9.7 L5 0 L0.3 4.7 H3 Z" fill="#000"/><rect x="0" y="10" width="10" height="1.3" fill="#000"/></svg><div class="a tf" style="left:371px;top:53px;width:376px;height:25px;"></div><div class="a" style="left:372px;top:78px;width:376px;height:1px;background:#ffffff"></div><div class="a" style="left:747px;top:54px;width:1px;height:25px;background:#ffffff"></div><div class="a cb" style="left:752px;top:60px;width:13px;height:13px;"></div><div class="a ui b" style="left:769px;top:58px;width:40px;height:17px;line-height:17px">Exact</div><div class="a" style="left:271px;top:79px;width:538px;height:862px;border:1px solid #7a8a99;background:#eeeeee"></div><div class="a ui b" style="left:309px;top:79px;width:300px;height:17px;line-height:17px">JD-GUI Decompiler - Editable: false</div><div class="a" style="left:272px;top:95px;width:521px;height:830px;background:#ffffff"></div><div class="a" style="left:309px;top:95px;width:484px;height:15px;background:#ffffaa"></div><div class="a" style="left:308px;top:95px;width:1px;height:830px;background:#dddddd"></div><div class="a" style="left:793px;top:95px;width:15px;height:830px;background:#eeeeee;border-left:1px solid #7a8a99"></div><div class="a" style="left:794px;top:95px;width:1px;height:830px;background:#cfdff0"></div><div class="a" style="left:794px;top:95px;width:1px;height:15px;background:#ffffff"></div><div class="a" style="left:794px;top:95px;width:14px;height:1px;background:#ffffff"></div><div class="a" style="left:794px;top:910px;width:1px;height:14px;background:#ffffff"></div><div class="a" style="left:793px;top:110px;width:15px;height:1px;background:#7a8a99"></div><div class="a" style="left:794px;top:111px;width:14px;height:1px;background:#cfdff0"></div><div class="a" style="left:793px;top:909px;width:15px;height:1px;background:#7a8a99"></div><div class="a" style="left:794px;top:910px;width:14px;height:1px;background:#ffffff"></div><div class="a" style="left:793px;top:924px;width:15px;height:1px;background:#7a8a99"></div><div class="a" style="left:793px;top:110px;width:15px;height:181px;border:1px solid #6382bf;border-right:0;background:linear-gradient(to right,#dde8f3 0%,#ffffff 22%,#dde8f3 58%,#b8cfe5 100%)"></div><div class="a" style="left:797px;top:198px;width:9px;height:1px;background:#6382bf"></div><div class="a" style="left:798px;top:199px;width:9px;height:1px;background:#ffffff"></div><div class="a" style="left:797px;top:200px;width:9px;height:1px;background:#6382bf"></div><div class="a" style="left:798px;top:201px;width:9px;height:1px;background:#ffffff"></div><div class="a" style="left:797px;top:202px;width:9px;height:1px;background:#6382bf"></div><div class="a" style="left:798px;top:203px;width:9px;height:1px;background:#ffffff"></div><svg class="a" style="left:797px;top:100px" width="8" height="4" viewBox="0 0 8 4" shape-rendering="crispEdges" fill="#262626"><rect x="3" y="0" width="2" height="1"/><rect x="2" y="1" width="4" height="1"/><rect x="1" y="2" width="6" height="1"/><rect x="0" y="3" width="8" height="1"/></svg><svg class="a" style="left:797px;top:916px" width="8" height="4" viewBox="0 0 8 4" shape-rendering="crispEdges" fill="#262626"><rect x="3" y="3" width="2" height="1"/><rect x="2" y="2" width="4" height="1"/><rect x="1" y="1" width="6" height="1"/><rect x="0" y="0" width="8" height="1"/></svg><div class="a" style="left:309px;top:925px;width:484px;height:15px;background:#eeeeee;border-top:1px solid #7a8a99"></div><div class="a" style="left:309px;top:926px;width:484px;height:1px;background:#cfdff0"></div><div class="a" style="left:309px;top:926px;width:15px;height:1px;background:#ffffff"></div><div class="a" style="left:309px;top:926px;width:1px;height:14px;background:#ffffff"></div><div class="a" style="left:778px;top:926px;width:14px;height:1px;background:#ffffff"></div><div class="a" style="left:324px;top:925px;width:1px;height:15px;background:#7a8a99"></div><div class="a" style="left:325px;top:926px;width:1px;height:14px;background:#cfdff0"></div><div class="a" style="left:777px;top:925px;width:1px;height:15px;background:#7a8a99"></div><div class="a" style="left:778px;top:926px;width:1px;height:14px;background:#ffffff"></div><div class="a" style="left:792px;top:925px;width:1px;height:15px;background:#7a8a99"></div><div class="a" style="left:324px;top:925px;width:268px;height:15px;border:1px solid #6382bf;border-bottom:0;background:linear-gradient(to bottom,#dde8f3 0%,#ffffff 22%,#dde8f3 58%,#b8cfe5 100%)"></div><div class="a" style="left:456px;top:929px;width:1px;height:9px;background:#6382bf"></div><div class="a" style="left:457px;top:930px;width:1px;height:9px;background:#ffffff"></div><div class="a" style="left:458px;top:929px;width:1px;height:9px;background:#6382bf"></div><div class="a" style="left:459px;top:930px;width:1px;height:9px;background:#ffffff"></div><div class="a" style="left:460px;top:929px;width:1px;height:9px;background:#6382bf"></div><div class="a" style="left:461px;top:930px;width:1px;height:9px;background:#ffffff"></div><svg class="a" style="left:314px;top:929px" width="4" height="8" viewBox="0 0 4 8" shape-rendering="crispEdges" fill="#262626"><rect x="0" y="3" width="1" height="2"/><rect x="1" y="2" width="1" height="4"/><rect x="2" y="1" width="1" height="6"/><rect x="3" y="0" width="1" height="8"/></svg><svg class="a" style="left:784px;top:929px" width="4" height="8" viewBox="0 0 4 8" shape-rendering="crispEdges" fill="#262626"><rect x="3" y="3" width="1" height="2"/><rect x="2" y="2" width="1" height="4"/><rect x="1" y="1" width="1" height="6"/><rect x="0" y="0" width="1" height="8"/></svg>
<div class="a" style="left:810px;top:53px;width:1px;height:889px;background:#ffffff"></div>
<div class="a" style="left:809px;top:79px;width:1px;height:863px;background:#ffffff"></div>
<div class="a" style="left:811px;top:53px;width:8px;height:888px;background:#eeeeee"></div>
<svg class="a" style="left:813px;top:55px" width="4" height="884" shape-rendering="crispEdges"><defs><pattern id="spM" width="4" height="4" patternUnits="userSpaceOnUse"><rect x="0" y="0" width="1" height="1" fill="#ffffff"/><rect x="1" y="1" width="1" height="1" fill="#7a8a99"/><rect x="2" y="2" width="1" height="1" fill="#ffffff"/><rect x="3" y="3" width="1" height="1" fill="#7a8a99"/></pattern></defs><rect width="4" height="884" fill="url(#spM)"/></svg>
<div class="a" style="left:819px;top:53px;width:1px;height:888px;background:#7a8a99"></div>
<div class="a btn" style="left:820px;top:53px;width:50px;height:26px;"></div><svg class="a" style="left:840px;top:60px" width="10" height="12" viewBox="0 0 10 12"><path d="M3 0 H7 V4 H9.7 L5 8.7 L0.3 4 H3 Z" fill="#000"/><rect x="0" y="10" width="10" height="1.3" fill="#000"/></svg><div class="a btn" style="left:870px;top:53px;width:50px;height:26px;"></div><svg class="a" style="left:890px;top:60px" width="10" height="12" viewBox="0 0 10 12"><path d="M3 8.7 H7 V4.7 H9.7 L5 0 L0.3 4.7 H3 Z" fill="#000"/><rect x="0" y="10" width="10" height="1.3" fill="#000"/></svg><div class="a tf" style="left:920px;top:53px;width:376px;height:25px;"></div><div class="a" style="left:921px;top:78px;width:376px;height:1px;background:#ffffff"></div><div class="a" style="left:1296px;top:54px;width:1px;height:25px;background:#ffffff"></div><div class="a cb" style="left:1301px;top:60px;width:13px;height:13px;"></div><div class="a ui b" style="left:1318px;top:58px;width:40px;height:17px;line-height:17px">Exact</div><div class="a" style="left:820px;top:79px;width:538px;height:862px;border:1px solid #7a8a99;background:#eeeeee"></div><div class="a ui b" style="left:858px;top:79px;width:300px;height:17px;line-height:17px">Bytecode Decompiler - Editable: false</div><div class="a" style="left:821px;top:95px;width:521px;height:830px;background:#ffffff"></div><div class="a" style="left:858px;top:95px;width:484px;height:15px;background:#ffffaa"></div><div class="a" style="left:857px;top:95px;width:1px;height:830px;background:#dddddd"></div><div class="a" style="left:1342px;top:95px;width:15px;height:830px;background:#eeeeee;border-left:1px solid #7a8a99"></div><div class="a" style="left:1343px;top:95px;width:1px;height:830px;background:#cfdff0"></div><div class="a" style="left:1343px;top:95px;width:1px;height:15px;background:#ffffff"></div><div class="a" style="left:1343px;top:95px;width:14px;height:1px;background:#ffffff"></div><div class="a" style="left:1343px;top:910px;width:1px;height:14px;background:#ffffff"></div><div class="a" style="left:1342px;top:110px;width:15px;height:1px;background:#7a8a99"></div><div class="a" style="left:1343px;top:111px;width:14px;height:1px;background:#cfdff0"></div><div class="a" style="left:1342px;top:909px;width:15px;height:1px;background:#7a8a99"></div><div class="a" style="left:1343px;top:910px;width:14px;height:1px;background:#ffffff"></div><div class="a" style="left:1342px;top:924px;width:15px;height:1px;background:#7a8a99"></div><div class="a" style="left:1342px;top:110px;width:15px;height:149px;border:1px solid #6382bf;border-right:0;background:linear-gradient(to right,#dde8f3 0%,#ffffff 22%,#dde8f3 58%,#b8cfe5 100%)"></div><div class="a" style="left:1346px;top:182px;width:9px;height:1px;background:#6382bf"></div><div class="a" style="left:1347px;top:183px;width:9px;height:1px;background:#ffffff"></div><div class="a" style="left:1346px;top:184px;width:9px;height:1px;background:#6382bf"></div><div class="a" style="left:1347px;top:185px;width:9px;height:1px;background:#ffffff"></div><div class="a" style="left:1346px;top:186px;width:9px;height:1px;background:#6382bf"></div><div class="a" style="left:1347px;top:187px;width:9px;height:1px;background:#ffffff"></div><svg class="a" style="left:1346px;top:100px" width="8" height="4" viewBox="0 0 8 4" shape-rendering="crispEdges" fill="#262626"><rect x="3" y="0" width="2" height="1"/><rect x="2" y="1" width="4" height="1"/><rect x="1" y="2" width="6" height="1"/><rect x="0" y="3" width="8" height="1"/></svg><svg class="a" style="left:1346px;top:916px" width="8" height="4" viewBox="0 0 8 4" shape-rendering="crispEdges" fill="#262626"><rect x="3" y="3" width="2" height="1"/><rect x="2" y="2" width="4" height="1"/><rect x="1" y="1" width="6" height="1"/><rect x="0" y="0" width="8" height="1"/></svg><div class="a" style="left:858px;top:925px;width:484px;height:15px;background:#eeeeee;border-top:1px solid #7a8a99"></div><div class="a" style="left:858px;top:926px;width:484px;height:1px;background:#cfdff0"></div><div class="a" style="left:858px;top:926px;width:15px;height:1px;background:#ffffff"></div><div class="a" style="left:858px;top:926px;width:1px;height:14px;background:#ffffff"></div><div class="a" style="left:1327px;top:926px;width:14px;height:1px;background:#ffffff"></div><div class="a" style="left:873px;top:925px;width:1px;height:15px;background:#7a8a99"></div><div class="a" style="left:874px;top:926px;width:1px;height:14px;background:#cfdff0"></div><div class="a" style="left:1326px;top:925px;width:1px;height:15px;background:#7a8a99"></div><div class="a" style="left:1327px;top:926px;width:1px;height:14px;background:#ffffff"></div><div class="a" style="left:1341px;top:925px;width:1px;height:15px;background:#7a8a99"></div><div class="a" style="left:873px;top:925px;width:295px;height:15px;border:1px solid #6382bf;border-bottom:0;background:linear-gradient(to bottom,#dde8f3 0%,#ffffff 22%,#dde8f3 58%,#b8cfe5 100%)"></div><div class="a" style="left:1018px;top:929px;width:1px;height:9px;background:#6382bf"></div><div class="a" style="left:1019px;top:930px;width:1px;height:9px;background:#ffffff"></div><div class="a" style="left:1020px;top:929px;width:1px;height:9px;background:#6382bf"></div><div class="a" style="left:1021px;top:930px;width:1px;height:9px;background:#ffffff"></div><div class="a" style="left:1022px;top:929px;width:1px;height:9px;background:#6382bf"></div><div class="a" style="left:1023px;top:930px;width:1px;height:9px;background:#ffffff"></div><svg class="a" style="left:863px;top:929px" width="4" height="8" viewBox="0 0 4 8" shape-rendering="crispEdges" fill="#262626"><rect x="0" y="3" width="1" height="2"/><rect x="1" y="2" width="1" height="4"/><rect x="2" y="1" width="1" height="6"/><rect x="3" y="0" width="1" height="8"/></svg><svg class="a" style="left:1333px;top:929px" width="4" height="8" viewBox="0 0 4 8" shape-rendering="crispEdges" fill="#262626"><rect x="3" y="3" width="1" height="2"/><rect x="2" y="2" width="1" height="4"/><rect x="1" y="1" width="1" height="6"/><rect x="0" y="0" width="1" height="8"/></svg>
<div class="a" style="left:1359px;top:53px;width:2px;height:889px;background:#ffffff"></div>
<div class="a" style="left:1361px;top:53px;width:8px;height:888px;background:#eeeeee"></div>
<svg class="a" style="left:1363px;top:54px" width="4" height="886" shape-rendering="crispEdges"><defs><pattern id="spR" width="4" height="4" patternUnits="userSpaceOnUse"><rect x="0" y="0" width="1" height="1" fill="#ffffff"/><rect x="1" y="1" width="1" height="1" fill="#7a8a99"/><rect x="2" y="2" width="1" height="1" fill="#ffffff"/><rect x="3" y="3" width="1" height="1" fill="#7a8a99"/></pattern></defs><rect width="4" height="886" fill="url(#spR)"/></svg>
<div class="a btn ui b" style="left:777px;top:951px;width:86px;height:26px;text-align:center;line-height:24px">Refresh</div>
<div class="a" style="left:309px;top:95px;width:484px;height:830px;overflow:hidden"><div class="a mono" style="left:0px;top:1px;width:900px"><div class="row" style="top:0px"><span class="k">package</span> cn.jiguang.service;</div><div class="row" style="top:15px"></div><div class="row" style="top:30px"><span class="k">public</span> <span class="k">class</span> Protocol</div><div class="row" style="top:45px"><span class="s">{</span></div><div class="row" style="top:60px">  <span class="k">private</span> <span class="k">static</span> <span class="k">final</span> <span class="t">String</span> z;</div><div class="row" style="top:75px"></div><div class="row" style="top:90px">  <span class="c">/* Error */</span></div><div class="row" style="top:105px">  <span class="k">static</span></div><div class="row" style="top:120px">  <span class="s">{</span></div><div class="row" style="top:135px">    <span class="c">// Byte code:</span></div><div class="row" style="top:150px">    <span class="c">//   0: ldc 12</span></div><div class="row" style="top:165px">    <span class="c">//   2: astore 6</span></div><div class="row" style="top:180px">    <span class="c">//   4: iconst_m1</span></div><div class="row" style="top:195px">    <span class="c">//   5: istore_2</span></div><div class="row" style="top:210px">    <span class="c">//   6: aload 6</span></div><div class="row" style="top:225px">    <span class="c">//   8: invokevirtual 18  java/lang/String:toCharArray  ()[C</span></div><div class="row" style="top:240px">    <span class="c">//   11: astore 6</span></div><div class="row" style="top:255px">    <span class="c">//   13: aload 6</span></div><div class="row" style="top:270px">    <span class="c">//   15: arraylength</span></div><div class="row" style="top:285px">    <span class="c">//   16: istore_1</span></div><div class="row" style="top:300px">    <span class="c">//   17: iload_1</span></div><div class="row" style="top:315px">    <span class="c">//   18: iconst_1</span></div><div class="row" style="top:330px">    <span class="c">//   19: if_icmpgt +376 -&gt; 395</span></div><div class="row" style="top:345px">    <span class="c">//   22: iconst_0</span></div><div class="row" style="top:360px">    <span class="c">//   23: istore_0</span></div><div class="row" style="top:375px">    <span class="c">//   24: iload_2</span></div><div class="row" style="top:390px">    <span class="c">//   25: istore 4</span></div><div class="row" style="top:405px">    <span class="c">//   27: iload_0</span></div><div class="row" style="top:420px">    <span class="c">//   28: istore_3</span></div><div class="row" style="top:435px">    <span class="c">//   29: iload_0</span></div><div class="row" style="top:450px">    <span class="c">//   30: istore_2</span></div><div class="row" style="top:465px">    <span class="c">//   31: aload 6</span></div><div class="row" style="top:480px">    <span class="c">//   33: astore 7</span></div><div class="row" style="top:495px">    <span class="c">//   35: aload 7</span></div><div class="row" style="top:510px">    <span class="c">//   37: iload_2</span></div><div class="row" style="top:525px">    <span class="c">//   38: caload</span></div><div class="row" style="top:540px">    <span class="c">//   39: istore 5</span></div><div class="row" style="top:555px">    <span class="c">//   41: iload_3</span></div><div class="row" style="top:570px">    <span class="c">//   42: iconst_5</span></div><div class="row" style="top:585px">    <span class="c">//   43: irem</span></div><div class="row" style="top:600px">    <span class="c">//   44: tableswitch default:+32-&gt;76, 0:+134-&gt;178, 1:+139-&gt;183, 2:+144-&gt;188, 3:+149-&gt;193</span></div><div class="row" style="top:615px">    <span class="c">//   76: bipush 17</span></div><div class="row" style="top:630px">    <span class="c">//   78: istore_0</span></div><div class="row" style="top:645px">    <span class="c">//   79: aload 7</span></div><div class="row" style="top:660px">    <span class="c">//   81: iload_2</span></div><div class="row" style="top:675px">    <span class="c">//   82: iload_0</span></div><div class="row" style="top:690px">    <span class="c">//   83: iload 5</span></div><div class="row" style="top:705px">    <span class="c">//   85: ixor</span></div><div class="row" style="top:720px">    <span class="c">//   86: i2c</span></div><div class="row" style="top:735px">    <span class="c">//   87: castore</span></div><div class="row" style="top:750px">    <span class="c">//   88: iload_3</span></div><div class="row" style="top:765px">    <span class="c">//   89: iconst_1</span></div><div class="row" style="top:780px">    <span class="c">//   90: iadd</span></div><div class="row" style="top:795px">    <span class="c">//   91: istore_3</span></div><div class="row" style="top:810px">    <span class="c">//   92: iload_1</span></div><div class="row" style="top:825px">    <span class="c">//   93: ifne +8 -&gt; 101</span></div></div></div>
<div class="a" style="left:270px;top:96px;width:26px;height:829px;overflow:hidden;font-size:12px;letter-spacing:-0.2246px"><div class="a ln" style="right:0;top:0px;height:15px;line-height:15px;width:30px">1</div><div class="a ln" style="right:0;top:15px;height:15px;line-height:15px;width:30px">2</div><div class="a ln" style="right:0;top:30px;height:15px;line-height:15px;width:30px">3</div><div class="a ln" style="right:0;top:45px;height:15px;line-height:15px;width:30px">4</div><div class="a ln" style="right:0;top:60px;height:15px;line-height:15px;width:30px">5</div><div class="a ln" style="right:0;top:75px;height:15px;line-height:15px;width:30px">6</div><div class="a ln" style="right:0;top:90px;height:15px;line-height:15px;width:30px">7</div><div class="a ln" style="right:0;top:105px;height:15px;line-height:15px;width:30px">8</div><div class="a ln" style="right:0;top:120px;height:15px;line-height:15px;width:30px">9</div><div class="a ln" style="right:0;top:135px;height:15px;line-height:15px;width:30px">10</div><div class="a ln" style="right:0;top:150px;height:15px;line-height:15px;width:30px">11</div><div class="a ln" style="right:0;top:165px;height:15px;line-height:15px;width:30px">12</div><div class="a ln" style="right:0;top:180px;height:15px;line-height:15px;width:30px">13</div><div class="a ln" style="right:0;top:195px;height:15px;line-height:15px;width:30px">14</div><div class="a ln" style="right:0;top:210px;height:15px;line-height:15px;width:30px">15</div><div class="a ln" style="right:0;top:225px;height:15px;line-height:15px;width:30px">16</div><div class="a ln" style="right:0;top:240px;height:15px;line-height:15px;width:30px">17</div><div class="a ln" style="right:0;top:255px;height:15px;line-height:15px;width:30px">18</div><div class="a ln" style="right:0;top:270px;height:15px;line-height:15px;width:30px">19</div><div class="a ln" style="right:0;top:285px;height:15px;line-height:15px;width:30px">20</div><div class="a ln" style="right:0;top:300px;height:15px;line-height:15px;width:30px">21</div><div class="a ln" style="right:0;top:315px;height:15px;line-height:15px;width:30px">22</div><div class="a ln" style="right:0;top:330px;height:15px;line-height:15px;width:30px">23</div><div class="a ln" style="right:0;top:345px;height:15px;line-height:15px;width:30px">24</div><div class="a ln" style="right:0;top:360px;height:15px;line-height:15px;width:30px">25</div><div class="a ln" style="right:0;top:375px;height:15px;line-height:15px;width:30px">26</div><div class="a ln" style="right:0;top:390px;height:15px;line-height:15px;width:30px">27</div><div class="a ln" style="right:0;top:405px;height:15px;line-height:15px;width:30px">28</div><div class="a ln" style="right:0;top:420px;height:15px;line-height:15px;width:30px">29</div><div class="a ln" style="right:0;top:435px;height:15px;line-height:15px;width:30px">30</div><div class="a ln" style="right:0;top:450px;height:15px;line-height:15px;width:30px">31</div><div class="a ln" style="right:0;top:465px;height:15px;line-height:15px;width:30px">32</div><div class="a ln" style="right:0;top:480px;height:15px;line-height:15px;width:30px">33</div><div class="a ln" style="right:0;top:495px;height:15px;line-height:15px;width:30px">34</div><div class="a ln" style="right:0;top:510px;height:15px;line-height:15px;width:30px">35</div><div class="a ln" style="right:0;top:525px;height:15px;line-height:15px;width:30px">36</div><div class="a ln" style="right:0;top:540px;height:15px;line-height:15px;width:30px">37</div><div class="a ln" style="right:0;top:555px;height:15px;line-height:15px;width:30px">38</div><div class="a ln" style="right:0;top:570px;height:15px;line-height:15px;width:30px">39</div><div class="a ln" style="right:0;top:585px;height:15px;line-height:15px;width:30px">40</div><div class="a ln" style="right:0;top:600px;height:15px;line-height:15px;width:30px">41</div><div class="a ln" style="right:0;top:615px;height:15px;line-height:15px;width:30px">42</div><div class="a ln" style="right:0;top:630px;height:15px;line-height:15px;width:30px">43</div><div class="a ln" style="right:0;top:645px;height:15px;line-height:15px;width:30px">44</div><div class="a ln" style="right:0;top:660px;height:15px;line-height:15px;width:30px">45</div><div class="a ln" style="right:0;top:675px;height:15px;line-height:15px;width:30px">46</div><div class="a ln" style="right:0;top:690px;height:15px;line-height:15px;width:30px">47</div><div class="a ln" style="right:0;top:705px;height:15px;line-height:15px;width:30px">48</div><div class="a ln" style="right:0;top:720px;height:15px;line-height:15px;width:30px">49</div><div class="a ln" style="right:0;top:735px;height:15px;line-height:15px;width:30px">50</div><div class="a ln" style="right:0;top:750px;height:15px;line-height:15px;width:30px">51</div><div class="a ln" style="right:0;top:765px;height:15px;line-height:15px;width:30px">52</div><div class="a ln" style="right:0;top:780px;height:15px;line-height:15px;width:30px">53</div><div class="a ln" style="right:0;top:795px;height:15px;line-height:15px;width:30px">54</div><div class="a ln" style="right:0;top:810px;height:15px;line-height:15px;width:30px">55</div><div class="a ln" style="right:0;top:825px;height:15px;line-height:15px;width:30px">56</div></div>
<svg class="a" style="left:298px;top:143px" width="9" height="9" viewBox="0 0 9 9"><rect x="0.5" y="0.5" width="8" height="8" fill="#fff" stroke="#808080" stroke-width="1"/><rect x="2" y="4" width="5" height="1" fill="#808080"/></svg>
<svg class="a" style="left:298px;top:218px" width="9" height="9" viewBox="0 0 9 9"><rect x="0.5" y="0.5" width="8" height="8" fill="#fff" stroke="#808080" stroke-width="1"/><rect x="2" y="4" width="5" height="1" fill="#808080"/></svg>
<div class="a" style="left:858px;top:95px;width:484px;height:830px;overflow:hidden"><div class="a mono" style="left:0px;top:1px;width:900px"><div class="row" style="top:0px"><span class="k">public</span> <span class="k">class</span> cn<span class="o">/</span>jiguang<span class="o">/</span>service<span class="o">/</span>Protocol <span class="s">{</span></div><div class="row" style="top:15px"></div><div class="row" style="top:30px">     <span class="k">private</span> <span class="k">static</span> <span class="k">final</span> java.lang.<span class="t">String</span> z;</div><div class="row" style="top:45px"></div><div class="row" style="top:60px">     <span class="k">static</span>  <span class="s">{</span> <span class="c">// &lt;clinit&gt; //()V</span></div><div class="row" style="top:75px">         TryCatch<span class="o">:</span> L1 to L2 handled by L3<span class="o">:</span> java<span class="o">/</span>lang<span class="o">/</span><span class="t">Throwable</span></div><div class="row" style="top:90px">             ldc <span class="q">"W#F\u0013titY\bp`\u0016\\\u0005ce[L]+n9Z\u0015t5k\u0002Zf\u0011"</span></div><div class="row" style="top:105px">             astore6</div><div class="row" style="top:120px">             iconst_m1</div><div class="row" style="top:135px">             istore2</div><div class="row" style="top:150px">         L4 <span class="s">{</span></div><div class="row" style="top:165px">             aload6</div><div class="row" style="top:180px">             invokevirtual java<span class="o">/</span>lang<span class="o">/</span><span class="t">String</span> toCharArray<span class="s">(()[</span>C<span class="s">)</span>;</div><div class="row" style="top:195px">             astore6</div><div class="row" style="top:210px">             aload6</div><div class="row" style="top:225px">             arraylength</div><div class="row" style="top:240px">             istore1</div><div class="row" style="top:255px">             iload1</div><div class="row" style="top:270px">             iconst_1</div><div class="row" style="top:285px">             if_icmpgt L5</div><div class="row" style="top:300px">             iconst_0</div><div class="row" style="top:315px">             istore0</div><div class="row" style="top:330px">             iload2</div><div class="row" style="top:345px">             istore4</div><div class="row" style="top:360px">         <span class="s">}</span></div><div class="row" style="top:375px">         L6 <span class="s">{</span></div><div class="row" style="top:390px">             iload0</div><div class="row" style="top:405px">             istore3</div><div class="row" style="top:420px">             iload0</div><div class="row" style="top:435px">             istore2</div><div class="row" style="top:450px">         <span class="s">}</span></div><div class="row" style="top:465px">         L7 <span class="s">{</span></div><div class="row" style="top:480px">             aload6</div><div class="row" style="top:495px">             astore7</div><div class="row" style="top:510px">             aload7</div><div class="row" style="top:525px">             iload2</div><div class="row" style="top:540px">             caload</div><div class="row" style="top:555px">             istore5</div><div class="row" style="top:570px">             iload3</div><div class="row" style="top:585px">             iconst_5</div><div class="row" style="top:600px">             irem</div><div class="row" style="top:615px">             tableswitch</div><div class="row" style="top:630px">                val<span class="o">:</span> <span class="n">0</span> <span class="o">-&gt;</span> L8</div><div class="row" style="top:645px">                val<span class="o">:</span> <span class="n">1</span> <span class="o">-&gt;</span> L9</div><div class="row" style="top:660px">                val<span class="o">:</span> <span class="n">2</span> <span class="o">-&gt;</span> L10</div><div class="row" style="top:675px">                <span class="k">default</span> <span class="o">-&gt;</span> L11</div><div class="row" style="top:690px">         <span class="s">}</span></div><div class="row" style="top:705px">         L11 <span class="s">{</span></div><div class="row" style="top:720px">             bipush <span class="n">17</span></div><div class="row" style="top:735px">             istore0</div><div class="row" style="top:750px">         <span class="s">}</span></div><div class="row" style="top:765px">         L12 <span class="s">{</span></div><div class="row" style="top:780px">             aload7</div><div class="row" style="top:795px">             iload2</div><div class="row" style="top:810px">             iload0</div><div class="row" style="top:825px">             iload5</div></div></div>
<div class="a" style="left:820px;top:96px;width:25px;height:829px;overflow:hidden;font-size:12px;letter-spacing:-0.2246px"><div class="a ln" style="right:0;top:0px;height:17px;line-height:17px;width:30px">1</div><div class="a ln" style="right:0;top:17px;height:17px;line-height:17px;width:30px">2</div><div class="a ln" style="right:0;top:34px;height:17px;line-height:17px;width:30px">3</div><div class="a ln" style="right:0;top:51px;height:17px;line-height:17px;width:30px">4</div><div class="a ln" style="right:0;top:68px;height:17px;line-height:17px;width:30px">5</div><div class="a ln" style="right:0;top:85px;height:17px;line-height:17px;width:30px">6</div><div class="a ln" style="right:0;top:102px;height:17px;line-height:17px;width:30px">7</div><div class="a ln" style="right:0;top:119px;height:17px;line-height:17px;width:30px">8</div><div class="a ln" style="right:0;top:136px;height:17px;line-height:17px;width:30px">9</div><div class="a ln" style="right:0;top:153px;height:17px;line-height:17px;width:30px">10</div><div class="a ln" style="right:0;top:170px;height:17px;line-height:17px;width:30px">11</div><div class="a ln" style="right:0;top:187px;height:17px;line-height:17px;width:30px">12</div><div class="a ln" style="right:0;top:204px;height:17px;line-height:17px;width:30px">13</div><div class="a ln" style="right:0;top:221px;height:17px;line-height:17px;width:30px">14</div><div class="a ln" style="right:0;top:238px;height:17px;line-height:17px;width:30px">15</div><div class="a ln" style="right:0;top:255px;height:17px;line-height:17px;width:30px">16</div><div class="a ln" style="right:0;top:272px;height:17px;line-height:17px;width:30px">17</div><div class="a ln" style="right:0;top:289px;height:17px;line-height:17px;width:30px">18</div><div class="a ln" style="right:0;top:306px;height:17px;line-height:17px;width:30px">19</div><div class="a ln" style="right:0;top:323px;height:17px;line-height:17px;width:30px">20</div><div class="a ln" style="right:0;top:340px;height:17px;line-height:17px;width:30px">21</div><div class="a ln" style="right:0;top:357px;height:17px;line-height:17px;width:30px">22</div><div class="a ln" style="right:0;top:374px;height:17px;line-height:17px;width:30px">23</div><div class="a ln" style="right:0;top:391px;height:17px;line-height:17px;width:30px">24</div><div class="a ln" style="right:0;top:408px;height:17px;line-height:17px;width:30px">25</div><div class="a ln" style="right:0;top:425px;height:17px;line-height:17px;width:30px">26</div><div class="a ln" style="right:0;top:442px;height:17px;line-height:17px;width:30px">27</div><div class="a ln" style="right:0;top:459px;height:17px;line-height:17px;width:30px">28</div><div class="a ln" style="right:0;top:476px;height:17px;line-height:17px;width:30px">29</div><div class="a ln" style="right:0;top:493px;height:17px;line-height:17px;width:30px">30</div><div class="a ln" style="right:0;top:510px;height:17px;line-height:17px;width:30px">31</div><div class="a ln" style="right:0;top:527px;height:17px;line-height:17px;width:30px">32</div><div class="a ln" style="right:0;top:544px;height:17px;line-height:17px;width:30px">33</div><div class="a ln" style="right:0;top:561px;height:17px;line-height:17px;width:30px">34</div><div class="a ln" style="right:0;top:578px;height:17px;line-height:17px;width:30px">35</div><div class="a ln" style="right:0;top:595px;height:17px;line-height:17px;width:30px">36</div><div class="a ln" style="right:0;top:612px;height:17px;line-height:17px;width:30px">37</div><div class="a ln" style="right:0;top:629px;height:17px;line-height:17px;width:30px">38</div><div class="a ln" style="right:0;top:646px;height:17px;line-height:17px;width:30px">39</div><div class="a ln" style="right:0;top:663px;height:17px;line-height:17px;width:30px">40</div><div class="a ln" style="right:0;top:680px;height:17px;line-height:17px;width:30px">41</div><div class="a ln" style="right:0;top:697px;height:17px;line-height:17px;width:30px">42</div><div class="a ln" style="right:0;top:714px;height:17px;line-height:17px;width:30px">43</div><div class="a ln" style="right:0;top:731px;height:17px;line-height:17px;width:30px">44</div><div class="a ln" style="right:0;top:748px;height:17px;line-height:17px;width:30px">45</div><div class="a ln" style="right:0;top:765px;height:17px;line-height:17px;width:30px">46</div><div class="a ln" style="right:0;top:782px;height:17px;line-height:17px;width:30px">47</div><div class="a ln" style="right:0;top:799px;height:17px;line-height:17px;width:30px">48</div><div class="a ln" style="right:0;top:816px;height:17px;line-height:17px;width:30px">49</div><div class="a ln" style="right:0;top:833px;height:17px;line-height:17px;width:30px">50</div></div>
<svg class="a" style="left:847px;top:98px" width="9" height="9" viewBox="0 0 9 9"><rect x="0.5" y="0.5" width="8" height="8" fill="#fff" stroke="#808080" stroke-width="1"/><rect x="2" y="4" width="5" height="1" fill="#808080"/></svg>
<svg class="a" style="left:847px;top:158px" width="9" height="9" viewBox="0 0 9 9"><rect x="0.5" y="0.5" width="8" height="8" fill="#fff" stroke="#808080" stroke-width="1"/><rect x="2" y="4" width="5" height="1" fill="#808080"/></svg>
<svg class="a" style="left:847px;top:248px" width="9" height="9" viewBox="0 0 9 9"><rect x="0.5" y="0.5" width="8" height="8" fill="#fff" stroke="#808080" stroke-width="1"/><rect x="2" y="4" width="5" height="1" fill="#808080"/></svg>
<svg class="a" style="left:847px;top:473px" width="9" height="9" viewBox="0 0 9 9"><rect x="0.5" y="0.5" width="8" height="8" fill="#fff" stroke="#808080" stroke-width="1"/><rect x="2" y="4" width="5" height="1" fill="#808080"/></svg>
<svg class="a" style="left:847px;top:563px" width="9" height="9" viewBox="0 0 9 9"><rect x="0.5" y="0.5" width="8" height="8" fill="#fff" stroke="#808080" stroke-width="1"/><rect x="2" y="4" width="5" height="1" fill="#808080"/></svg>
<svg class="a" style="left:847px;top:803px" width="9" height="9" viewBox="0 0 9 9"><rect x="0.5" y="0.5" width="8" height="8" fill="#fff" stroke="#808080" stroke-width="1"/><rect x="2" y="4" width="5" height="1" fill="#808080"/></svg>
<svg class="a" style="left:847px;top:863px" width="9" height="9" viewBox="0 0 9 9"><rect x="0.5" y="0.5" width="8" height="8" fill="#fff" stroke="#808080" stroke-width="1"/><rect x="2" y="4" width="5" height="1" fill="#808080"/></svg>
</div>
</body></html>
